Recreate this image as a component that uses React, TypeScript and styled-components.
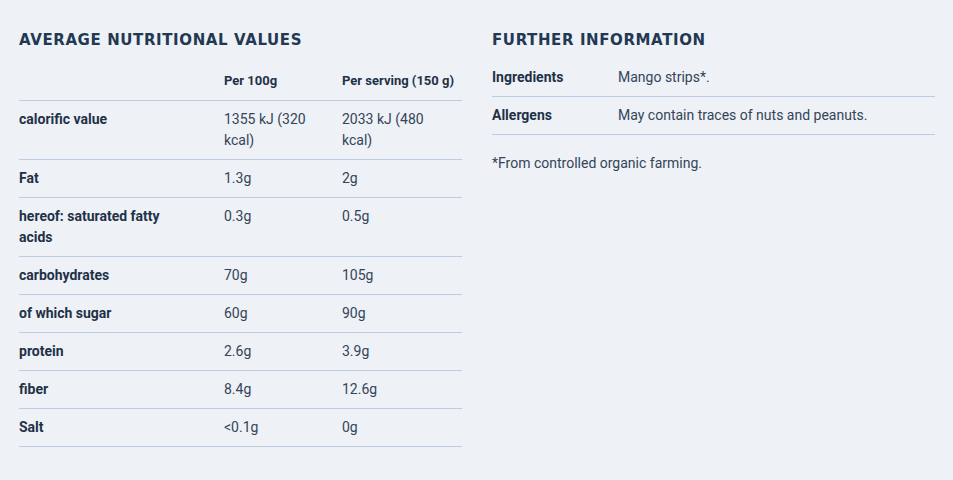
import React from "react";
import styled, { createGlobalStyle } from "styled-components";

const Global = createGlobalStyle`
  html, body { margin: 0; padding: 0; background: #eef1f5; }
  body { font-family: Roboto, "Liberation Sans", sans-serif; color: #233449; }
`;

const Page = styled.div`
  display: grid;
  grid-template-columns: 443px 443px;
  column-gap: 30px;
  padding: 30px 18px 0 19px;
`;

const Section = styled.section`
  display: flex;
  flex-direction: column;
`;

const Heading = styled.h2`
  margin: 0;
  font-family: "DejaVu Sans", sans-serif;
  font-weight: 700;
  font-size: 15px;
  line-height: 20px;
  letter-spacing: 0.6px;
  color: #233852;
  text-transform: uppercase;
`;

const Table = styled.table<{ $top: number }>`
  width: 100%;
  table-layout: fixed;
  border-collapse: collapse;
  margin-top: ${(p) => p.$top}px;
  font-size: 14px;
  line-height: 21px;
`;

const Col = styled.col<{ $w?: number }>`
  width: ${(p) => (p.$w ? `${p.$w}px` : "auto")};
`;

const Row = styled.tr`
  border-bottom: 1px solid #bccde1;
`;

const Cell = styled.td<{ $pr?: number; $bold?: boolean }>`
  box-sizing: border-box;
  padding: 8px ${(p) => p.$pr ?? 20}px 8px 0;
  vertical-align: top;
  font-weight: ${(p) => (p.$bold ? 700 : 400)};
  color: ${(p) => (p.$bold ? "#1f3148" : "#34445a")};
`;

const HeadCell = styled.th<{ $pr?: number }>`
  box-sizing: border-box;
  padding: 8px ${(p) => p.$pr ?? 10}px 9px 0;
  text-align: left;
  vertical-align: top;
  font-size: 13px;
  font-weight: 700;
  color: #1f3148;
  white-space: nowrap;
`;

const Note = styled.p`
  margin: 18px 0 0;
  font-size: 14px;
  line-height: 21px;
  color: #34445a;
`;

const rows: [string, string, string][] = [
  ["calorific value", "1355 kJ (320 kcal)", "2033 kJ (480 kcal)"],
  ["Fat", "1.3g", "2g"],
  ["hereof: saturated fatty acids", "0.3g", "0.5g"],
  ["carbohydrates", "70g", "105g"],
  ["of which sugar", "60g", "90g"],
  ["protein", "2.6g", "3.9g"],
  ["fiber", "8.4g", "12.6g"],
  ["Salt", "<0.1g", "0g"],
];

export default function App() {
  return (
    <>
      <Global />
      <Page>
        <Section>
          <Heading>Average nutritional values</Heading>
          <Table $top={12}>
            <colgroup>
              <Col $w={205} />
              <Col $w={118} />
              <Col />
            </colgroup>
            <thead>
              <Row>
                <HeadCell $pr={40} />
                <HeadCell $pr={30}>Per 100g</HeadCell>
                <HeadCell $pr={0}>Per serving (150 g)</HeadCell>
              </Row>
            </thead>
            <tbody>
              {rows.map(([a, b, c]) => (
                <Row key={a}>
                  <Cell $pr={40} $bold>{a}</Cell>
                  <Cell $pr={30}>{b}</Cell>
                  <Cell $pr={10}>{c}</Cell>
                </Row>
              ))}
            </tbody>
          </Table>
        </Section>
        <Section>
          <Heading>Further information</Heading>
          <Table $top={9}>
            <colgroup>
              <Col $w={126} />
              <Col />
            </colgroup>
            <tbody>
              <Row>
                <Cell $bold>Ingredients</Cell>
                <Cell>Mango strips*.</Cell>
              </Row>
              <Row>
                <Cell $bold>Allergens</Cell>
                <Cell>May contain traces of nuts and peanuts.</Cell>
              </Row>
            </tbody>
          </Table>
          <Note>*From controlled organic farming.</Note>
        </Section>
      </Page>
    </>
  );
}
